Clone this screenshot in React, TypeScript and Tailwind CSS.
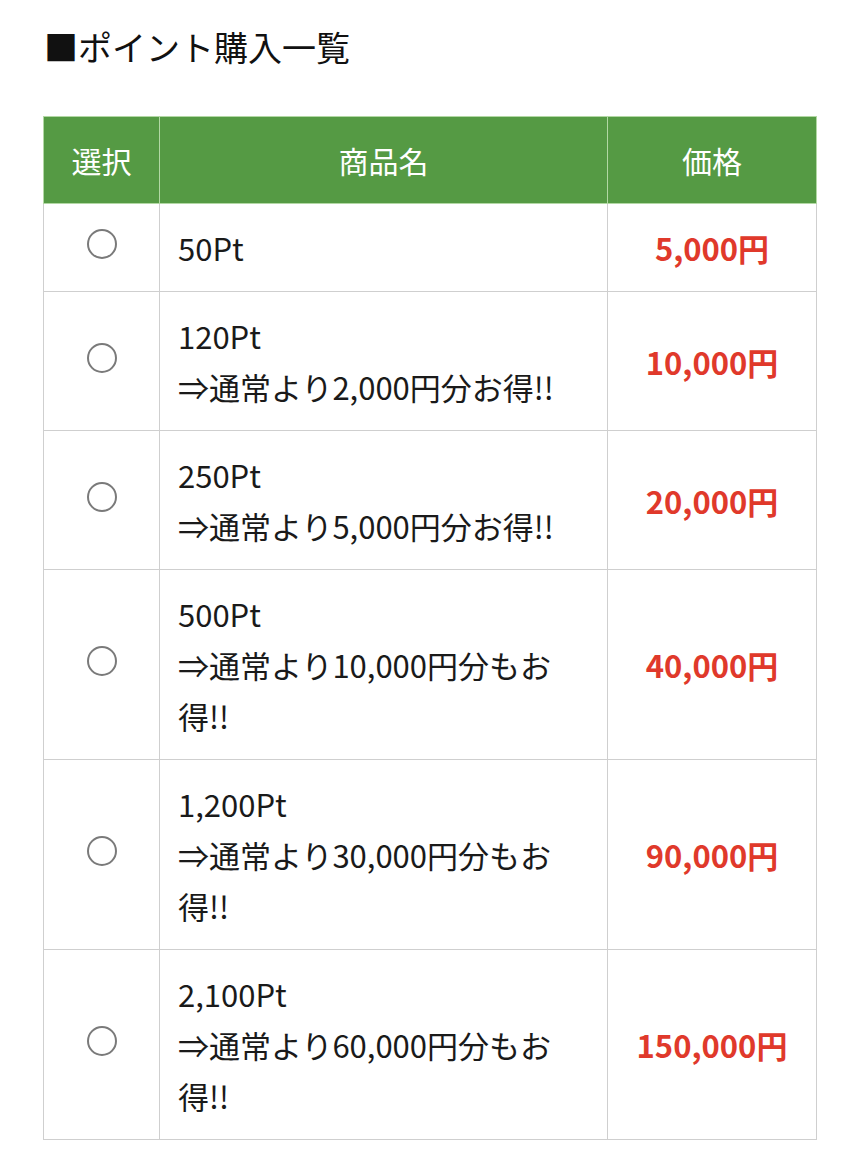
import React from "react";

const rows: { name: string[]; price: string }[] = [
  { name: ["50Pt"], price: "5,000円" },
  { name: ["120Pt", "⇒通常より2,000円分お得!!"], price: "10,000円" },
  { name: ["250Pt", "⇒通常より5,000円分お得!!"], price: "20,000円" },
  { name: ["500Pt", "⇒通常より10,000円分もお", "得!!"], price: "40,000円" },
  { name: ["1,200Pt", "⇒通常より30,000円分もお", "得!!"], price: "90,000円" },
  { name: ["2,100Pt", "⇒通常より60,000円分もお", "得!!"], price: "150,000円" },
];

export default function App() {
  return (
    <div
      className="w-[858px] min-h-[1160px] bg-white text-[#1a1a1a]"
      style={{ fontFamily: '"Noto Sans CJK JP", "Noto Sans", sans-serif' }}
    >
      <div className="pt-[22px] pl-[44px] text-[34px] leading-[50px] text-[#111]">
        ■ポイント購入一覧
      </div>
      <table className="ml-[43px] mt-[44px] w-[773px] border-collapse table-fixed text-[31px] leading-[51px]">
        <colgroup>
          <col className="w-[116px]" />
          <col className="w-[448px]" />
          <col className="w-[209px]" />
        </colgroup>
        <thead>
          <tr className="bg-[#559a44] text-white text-[30px]">
            <th className="h-[87px] border border-[#b2d8a4] font-normal text-center align-middle p-0">選択</th>
            <th className="h-[87px] border border-[#b2d8a4] font-normal text-center align-middle p-0">商品名</th>
            <th className="h-[87px] border border-[#b2d8a4] font-normal text-center align-middle p-0">価格</th>
          </tr>
        </thead>
        <tbody>
          {rows.map((r, i) => (
            <tr key={i}>
              <td className="border border-[#cfcfcf] align-middle p-0">
                <div className="flex justify-center">
                  <div className="w-[30px] h-[30px] rounded-full border-2 border-[#7a7a7a] bg-white mb-[7px]" />
                </div>
              </td>
              <td className="border border-[#cfcfcf] align-middle py-[18px] px-[18px]">
                {r.name.map((l, j) => (
                  <div key={j} className="whitespace-nowrap">
                    {l}
                  </div>
                ))}
              </td>
              <td className="border border-[#cfcfcf] align-middle text-center p-0 font-bold text-[#e0392b]">
                {r.price}
              </td>
            </tr>
          ))}
        </tbody>
      </table>
    </div>
  );
}
